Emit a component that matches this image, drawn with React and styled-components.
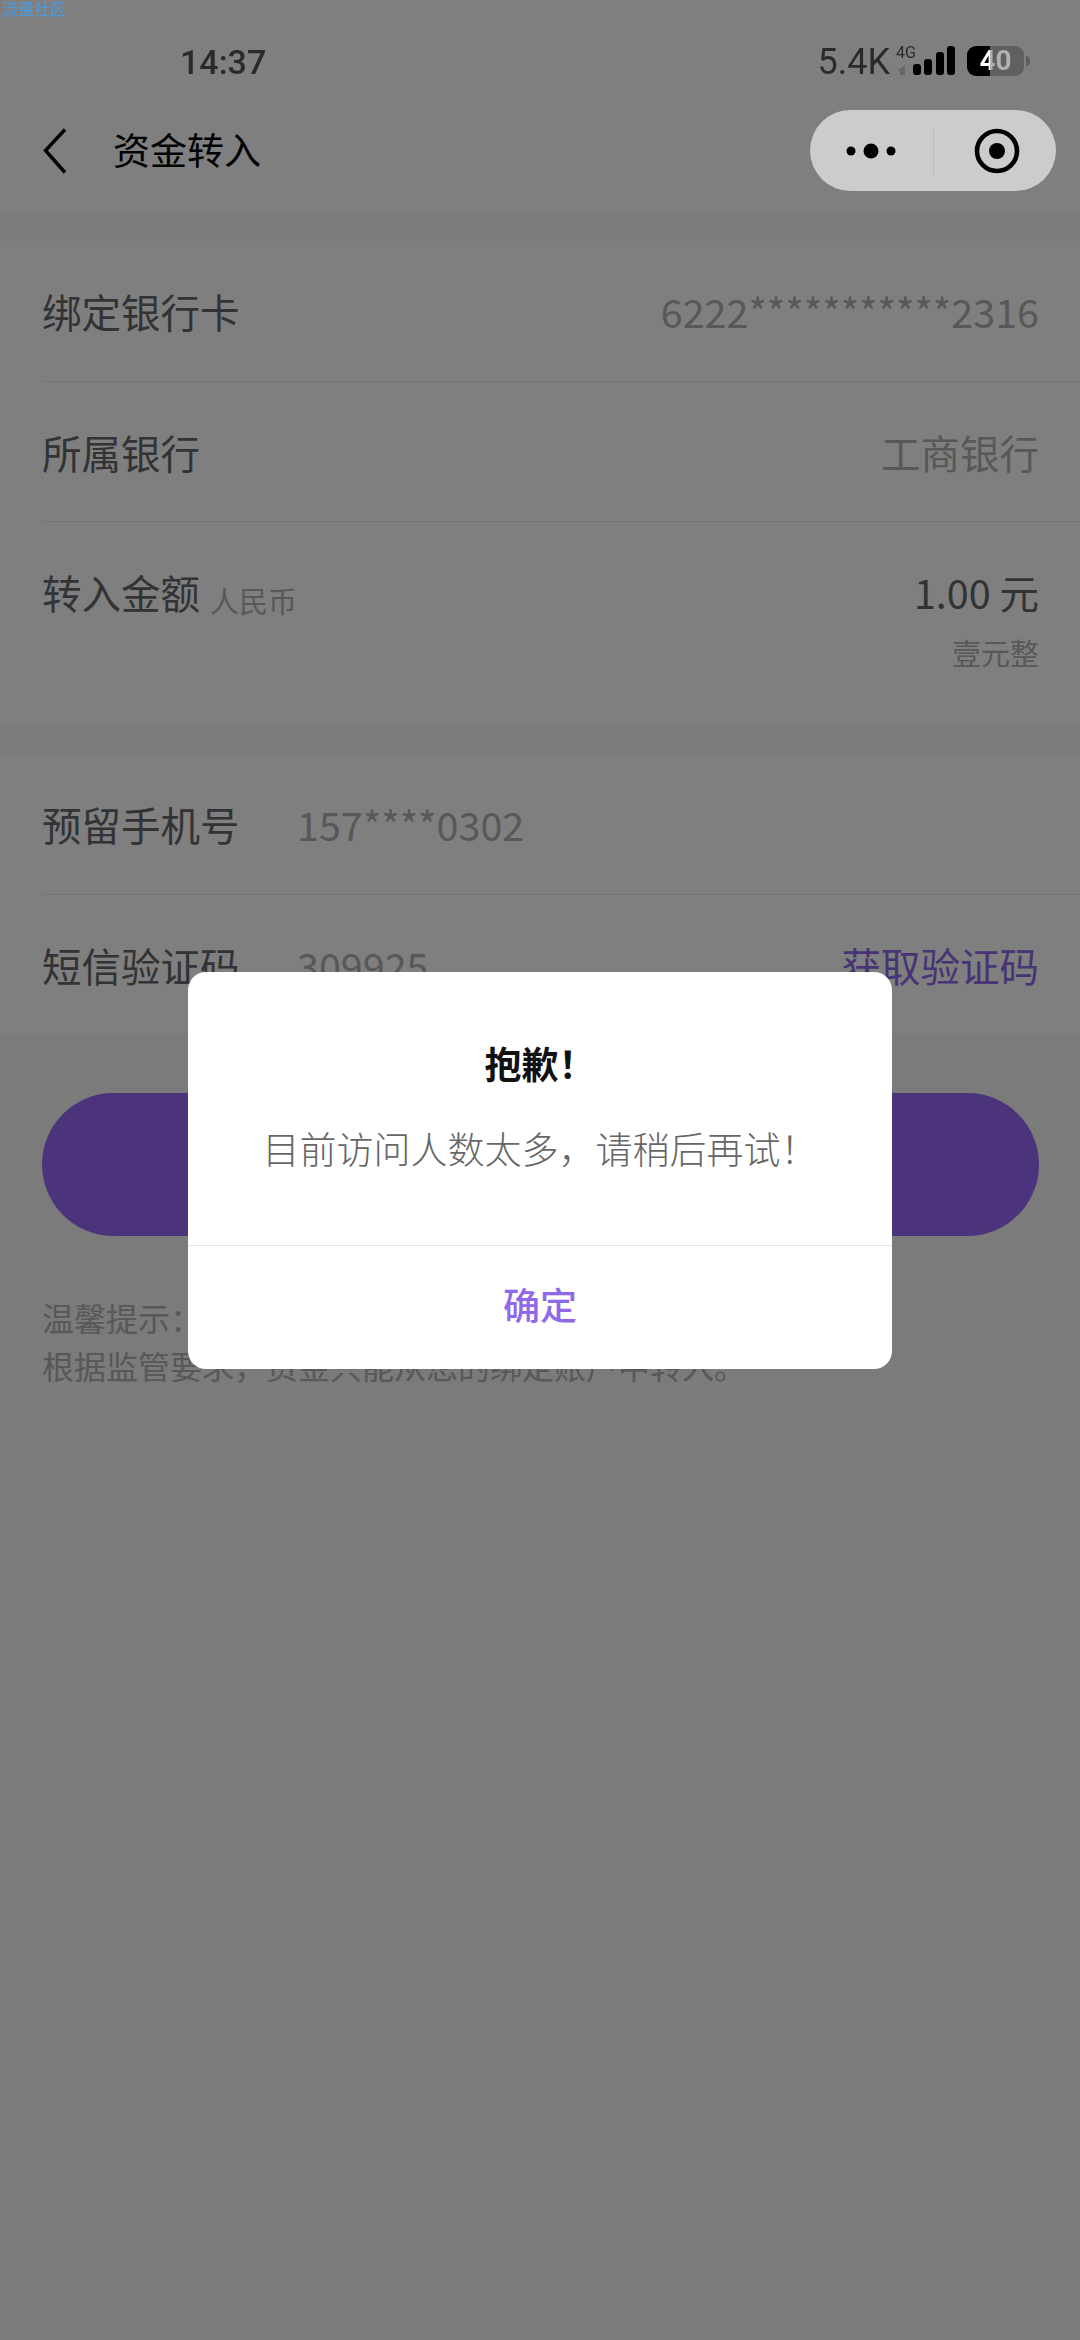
import styled, { createGlobalStyle } from "styled-components";

const GlobalStyle = createGlobalStyle`
  html, body {
    margin: 0;
    padding: 0;
    background: #f6f6f6;
  }
  * {
    box-sizing: border-box;
  }
`;

const FONT = `"Noto Sans CJK SC", "Noto Sans", sans-serif`;

export default function App() {
  return (
    <>
      <GlobalStyle />
      <Page>
        <Header>
          <StatusBar>
            <Time>14:37</Time>
            <StatusRight>
              <Speed>5.4K</Speed>
              <NetworkIcon />
              <Battery>
                <BatteryBody>
                  <BatteryText>40</BatteryText>
                </BatteryBody>
                <BatteryTip />
              </Battery>
            </StatusRight>
          </StatusBar>
          <NavBar>
            <NavLeft>
              <svg width="24" height="46" viewBox="0 0 24 46" fill="none">
                <path d="M22 1.5 L2.5 22.5 L22 44.5" stroke="#000" strokeWidth="3.4" />
              </svg>
              <NavTitle>资金转入</NavTitle>
            </NavLeft>
            <Capsule>
              <CapsuleSide $width={123}>
                <svg width="52" height="16" viewBox="0 0 52 16">
                  <circle cx="5" cy="8" r="4.5" fill="#000" />
                  <circle cx="25" cy="8" r="7.5" fill="#000" />
                  <circle cx="45" cy="8" r="4.5" fill="#000" />
                </svg>
              </CapsuleSide>
              <CapsuleLine />
              <CapsuleSide $width={122} $shift={4}>
                <svg width="46" height="46" viewBox="0 0 46 46" fill="none">
                  <circle cx="23" cy="23" r="20" stroke="#000" strokeWidth="4.6" />
                  <circle cx="23" cy="23" r="8" fill="#000" />
                </svg>
              </CapsuleSide>
            </Capsule>
          </NavBar>
        </Header>

        <Section>
          <Row>
            <Label>绑定银行卡</Label>
            <Value>6222***********2316</Value>
          </Row>
          <Row>
            <Label>所属银行</Label>
            <Value>工商银行</Value>
          </Row>
          <AmountRow>
            <Label>
              转入金额<Unit>人民币</Unit>
            </Label>
            <AmountCol>
              <Amount>1.00 元</Amount>
              <AmountWords>壹元整</AmountWords>
            </AmountCol>
          </AmountRow>
        </Section>

        <Section>
          <Row>
            <FieldLabel>预留手机号</FieldLabel>
            <FieldValue>157****0302</FieldValue>
          </Row>
          <Row>
            <FieldLabel>短信验证码</FieldLabel>
            <FieldValue>309925</FieldValue>
            <CodeLink>获取验证码</CodeLink>
          </Row>
        </Section>

        <SubmitButton />

        <Tips>
          温馨提示：
          <br />
          根据监管要求，资金只能从您的绑定账户中转入。
        </Tips>
      </Page>

      <Overlay>
        <Dialog>
          <DialogBody>
            <DialogTitle>抱歉！</DialogTitle>
            <DialogText>目前访问人数太多，请稍后再试！</DialogText>
          </DialogBody>
          <DialogAction>确定</DialogAction>
        </Dialog>
      </Overlay>
      <Watermark>流量社区</Watermark>
    </>
  );
}

function NetworkIcon() {
  return (
    <NetworkWrap>
      <NetworkType>4G</NetworkType>
      <svg width="60" height="30" viewBox="0 0 60 30">
        <path d="M1 25 L9 19 L9 29 L4 29 L4 25 Z" fill="#666" />
        <rect x="17" y="18" width="8" height="11" rx="3" fill="#000" />
        <rect x="28" y="13" width="8" height="16" rx="3" fill="#000" />
        <rect x="40" y="6" width="8" height="23" rx="3" fill="#000" />
        <rect x="51" y="0" width="8" height="29" rx="3" fill="#000" />
      </svg>
    </NetworkWrap>
  );
}

const Page = styled.div`
  width: 1080px;
  height: 2340px;
  overflow: hidden;
  background: #f6f6f6;
  font-family: ${FONT};
`;
const Header = styled.header`
  height: 213px;
  background: #fff;
`;
// 状态栏和胶囊按钮在遮罩之上
const StatusBar = styled.div`
  position: relative;
  z-index: 2;
  height: 110px;
  padding: 41px 50px 0 180px;
  display: flex;
  justify-content: space-between;
  align-items: flex-start;
`;
const Time = styled.span`
  font-family: Roboto, sans-serif;
  font-size: 34px;
  font-weight: 500;
  line-height: 42px;
  color: #2a2a2a;
`;
const StatusRight = styled.div`
  display: flex;
  align-items: flex-start;
  margin-top: 5px;
`;
const Speed = styled.span`
  font-family: Roboto, sans-serif;
  font-size: 36px;
  line-height: 42px;
  color: #2a2a2a;
  margin-top: -5px;
`;
const NetworkWrap = styled.span`
  position: relative;
  display: block;
  width: 60px;
  height: 30px;
  margin-left: 6px;
`;
const NetworkType = styled.span`
  position: absolute;
  top: -1px;
  left: 0;
  font-family: Roboto, sans-serif;
  font-size: 16px;
  line-height: 16px;
  color: #2a2a2a;
`;
const Battery = styled.div`
  display: flex;
  align-items: center;
  margin-left: 11px;
`;
const BatteryBody = styled.div`
  width: 57px;
  height: 30px;
  border-radius: 9px;
  background: linear-gradient(90deg, #000 0 23px, #606060 23px);
`;
const BatteryText = styled.div`
  background: linear-gradient(90deg, #fff 0 23px, #b0b0b0 23px);
  -webkit-background-clip: text;
  background-clip: text;
  color: transparent;
  font-family: Roboto, sans-serif;
  font-size: 28px;
  font-weight: 700;
  line-height: 30px;
  text-align: center;
`;
const BatteryTip = styled.span`
  width: 4px;
  height: 10px;
  margin-left: 2px;
  border-radius: 0 4px 4px 0;
  background: #606060;
`;
const NavBar = styled.div`
  height: 81px;
  padding: 0 24px 0 43px;
  display: flex;
  justify-content: space-between;
  align-items: center;
`;
const NavLeft = styled.div`
  display: flex;
  align-items: center;
  gap: 46px;
`;
const NavTitle = styled.h1`
  margin: 0 0 3px;
  font-size: 37px;
  font-weight: 400;
  line-height: 48px;
  color: #000;
`;
const Capsule = styled.div`
  position: relative;
  z-index: 2;
  width: 246px;
  height: 81px;
  border-radius: 41px;
  background: rgba(255, 255, 255, 0.6);
  display: flex;
  align-items: center;
`;
const CapsuleSide = styled.div`
  width: ${props => props.$width}px;
  display: flex;
  align-items: center;
  justify-content: center;
  padding-left: ${props => props.$shift || 0}px;
`;
const CapsuleLine = styled.div`
  width: 1px;
  height: 50px;
  background: #bbb;
`;
const Section = styled.section`
  margin-top: 28px;
  padding-left: 42px;
  background: #fff;
`;
const Row = styled.div`
  height: 140px;
  padding-right: 41px;
  display: flex;
  align-items: center;
  & + & {
    border-top: 1px solid #ebebeb;
  }
`;
const AmountRow = styled(Row)`
  height: 205px;
  align-items: flex-start;
  padding-top: 40px;
`;
const Label = styled.div`
  font-size: 39.5px;
  line-height: 60px;
  color: #66666c;
`;
const FieldLabel = styled(Label)`
  width: 255px;
  flex: none;
`;
const Unit = styled.span`
  margin-left: 10px;
  font-size: 29px;
  color: #b0b0b0;
  position: relative;
  top: 4px;
`;
const Value = styled.div`
  margin-left: auto;
  font-size: 39.5px;
  line-height: 60px;
  color: #b0b0b0;
`;
const FieldValue = styled.div`
  font-size: 39.5px;
  line-height: 60px;
  color: #b0b0b0;
`;
const CodeLink = styled.div`
  margin-left: auto;
  font-size: 39.5px;
  line-height: 60px;
  color: #9068e8;
`;
const AmountCol = styled.div`
  margin-left: auto;
  text-align: right;
`;
const Amount = styled.div`
  font-size: 39.5px;
  line-height: 60px;
  color: #66666c;
`;
const AmountWords = styled.div`
  margin-top: 5px;
  font-size: 29px;
  line-height: 50px;
  color: #b0b0b0;
`;
const SubmitButton = styled.div`
  height: 143px;
  margin: 58px 41px 0 42px;
  border-radius: 72px;
  background: #9669f6;
  position: relative;
  top: 1px;
`;
const Tips = styled.p`
  margin: 58px 42px 0;
  font-size: 32px;
  line-height: 48px;
  color: #b0b0b0;
`;
const Overlay = styled.div`
  position: fixed;
  z-index: 1;
  inset: 0;
  background: rgba(0, 0, 0, 0.5);
  display: flex;
  align-items: center;
  justify-content: center;
  font-family: ${FONT};
`;
const Dialog = styled.div`
  width: 704px;
  height: 397px;
  border-radius: 18px;
  background: #fff;
  display: flex;
  flex-direction: column;
`;
const DialogBody = styled.div`
  height: 274px;
  padding-top: 63px;
  text-align: center;
  border-bottom: 1px solid #e5e5e5;
`;
const DialogTitle = styled.h2`
  margin: 0;
  font-size: 37px;
  font-weight: 700;
  line-height: 56px;
  color: #111;
`;
const DialogText = styled.p`
  margin: 28px 0 0;
  font-size: 37px;
  font-weight: 300;
  line-height: 58px;
  color: #666;
`;
const DialogAction = styled.div`
  flex: 1;
  display: flex;
  align-items: center;
  justify-content: center;
  padding-bottom: 6px;
  font-size: 37px;
  font-weight: 500;
  color: #9068e8;
`;
const Watermark = styled.div`
  position: fixed;
  z-index: 3;
  top: 0;
  left: 2px;
  font-family: ${FONT};
  font-size: 16px;
  line-height: 16px;
  color: #4a9be0;
`;
